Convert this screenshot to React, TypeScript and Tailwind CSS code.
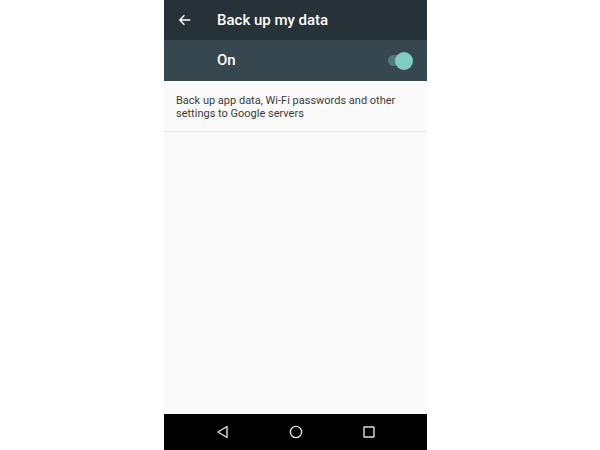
const App = () => {
   return (
      <div className="w-[600px] h-[450px] bg-white flex font-['Roboto',sans-serif]">
         <div className="ml-[164px] w-[263px] h-full flex flex-col bg-[#fafafa]">
            <div className="h-[40px] bg-[#263238] flex items-center text-white">
               <svg width="14" height="14" viewBox="0 0 24 24" className="ml-[14px] shrink-0" fill="none" stroke="white" strokeWidth="2.4">
                  <path d="M21 12H4M11 4l-8 8 8 8" />
               </svg>
               <span className="ml-[25px] text-[15px] font-medium whitespace-nowrap">Back up my data</span>
            </div>
            <div className="h-[41px] bg-[#37474f] flex items-center text-white">
               <span className="ml-[53px] text-[15px] font-medium">On</span>
               <div className="ml-auto mr-[14px] relative w-[26px] h-[18px] flex items-center">
                  <div className="w-[22px] h-[11px] rounded-full bg-[#4f7b78] ml-[1px]" />
                  <div className="absolute right-0 top-0 w-[18px] h-[18px] rounded-full bg-[#80cbc4]" />
               </div>
            </div>
            <div className="px-[12px] pt-[13px] pb-[11px] border-b border-[#e6e6e6] text-[11px] leading-[13px] text-[#3a3a3a]">
               Back up app data, Wi-Fi passwords and other<br />settings to Google servers
            </div>
            <div className="flex-1" />
            <div className="h-[36px] bg-black flex items-center justify-center gap-[59px]">
               <svg width="14" height="14" viewBox="0 0 14 14" fill="none" stroke="#e0e0e0" strokeWidth="1.4">
                  <path d="M11 1.5v11L2 7z" strokeLinejoin="round" />
               </svg>
               <svg width="14" height="14" viewBox="0 0 14 14" fill="none" stroke="#e0e0e0" strokeWidth="1.4">
                  <circle cx="7" cy="7" r="5.6" />
               </svg>
               <svg width="14" height="14" viewBox="0 0 14 14" fill="none" stroke="#e0e0e0" strokeWidth="1.4">
                  <rect x="2" y="2" width="10" height="10" rx="0.5" />
               </svg>
            </div>
         </div>
      </div>
   );
};

export default App;
